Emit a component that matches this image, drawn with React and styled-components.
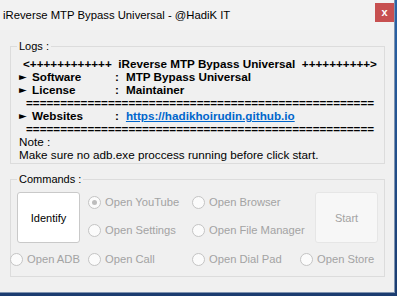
import React from 'react';
import styled, { createGlobalStyle } from 'styled-components';

const GlobalStyle = createGlobalStyle`
    body {
        margin: 0;
        background: #1d4a86;
        font-family: "Liberation Sans", Arial, sans-serif;
    }
`;

const Desktop = styled.div`
    width: 397px;
    height: 296px;
    overflow: hidden;
    background: linear-gradient(180deg, #2a64a8 0%, #1b3c70 100%);
`;

const Window = styled.div`
    width: 395px;
    height: 293px;
    box-sizing: border-box;
    background: #f0f0f0;
    border-right: 1px solid #7f93b0;
    border-bottom: 1px solid #7f93b0;
    display: flex;
    flex-direction: column;
`;

const TitleBar = styled.div`
    height: 30px;
    flex: none;
    display: flex;
    justify-content: space-between;
    align-items: flex-start;
    background: #f2f2f2;
`;

const Title = styled.div`
    padding-left: 3px;
    line-height: 30px;
    font-size: 11.3px;
    color: #000;
`;

const Close = styled.div`
    width: 19px;
    height: 19px;
    margin-top: 3px;
    background: #c75050;
    color: #fff;
    font-size: 11px;
    font-weight: bold;
    line-height: 18px;
    text-align: center;
`;

const Group = styled.fieldset`
    margin: ${p => p.$top}px 0 0 10px;
    width: 375px;
    min-width: 0;
    box-sizing: border-box;
    border: 1px solid #dcdcdc;
    padding: ${p => p.$pad};
`;

const Legend = styled.legend`
    padding: 0 2px;
    margin-left: ${p => p.$offset}px;
    font-size: 11px;
    line-height: 12px;
    color: #000;
`;

const Line = styled.div`
    height: 13px;
    line-height: 13px;
    font-size: 11.7px;
    font-weight: ${p => (p.$bold ? 'bold' : 'normal')};
    white-space: pre;
    color: #000;
    display: flex;
`;

const Banner = styled(Line)`
    padding-left: 4px;
`;

const Separator = styled(Line)`
    margin-left: 7px;
`;

const Arrow = styled.span`
    width: 13px;
    font-size: 10px;
    font-family: "DejaVu Sans", sans-serif;
`;

const Key = styled.span`
    width: 83px;
`;

const Value = styled.span`
    margin-left: ${p => p.$gap}px;
`;

const Link = styled.a`
    color: #0066cc;
    text-decoration: underline;
`;

const CommandGrid = styled.div`
    display: grid;
    grid-template-columns: 78px 104px 108px 1fr;
    grid-template-rows: 28px 28px 30px;
    margin-left: -1px;
`;

const Button = styled.div`
    grid-column: ${p => p.$col};
    grid-row: 1 / span 2;
    margin: 4px 0 0 ${p => p.$indent}px;
    width: 63px;
    height: 51px;
    box-sizing: border-box;
    border: 1px solid ${p => (p.$disabled ? '#e6e6e6' : '#c9c9c9')};
    border-radius: 3px;
    background: ${p => (p.$disabled ? '#f7f7f7' : '#ffffff')};
    color: ${p => (p.$disabled ? '#a3a3a3' : '#000')};
    font-size: 11px;
    display: flex;
    align-items: center;
    justify-content: center;
`;

const RadioItem = styled.label`
    display: flex;
    align-items: center;
    gap: 4px;
    font-size: 11.2px;
    color: #a3a3a3;
    white-space: nowrap;
`;

const Circle = styled.span`
    flex: none;
    width: 13px;
    height: 13px;
    box-sizing: border-box;
    border-radius: 50%;
    border: 1px solid #c4c4c4;
    background: #fbfbfb;
    display: flex;
    align-items: center;
    justify-content: center;
    &::after {
        content: '';
        width: 5px;
        height: 5px;
        border-radius: 50%;
        background: ${p => (p.$checked ? '#bdbdbd' : 'transparent')};
    }
`;

const Radio = ({ label, checked }) => (
    <RadioItem>
        <Circle $checked={checked} />
        {label}
    </RadioItem>
);

const InfoRow = ({ name, value, gap = 8, link }) => (
    <Line $bold>
        <Arrow>►</Arrow>
        <Key>{name}</Key>
        <span>:</span>
        <Value $gap={gap}>{link ? <Link>{value}</Link> : value}</Value>
    </Line>
);

const App = () => {
    const sep = '='.repeat(51);

    return (
        <Desktop>
            <GlobalStyle />
            <Window>
                <TitleBar>
                    <Title>iReverse MTP Bypass Universal - @HadiK IT</Title>
                    <Close>x</Close>
                </TitleBar>

                <Group $top={10} $pad="5px 8px 2px">
                    <Legend $offset={-2}>Logs :</Legend>
                    <Banner $bold>{'<++++++++++++  iReverse MTP Bypass Universal  ++++++++++>'}</Banner>
                    <InfoRow name="Software" value="MTP Bypass Universal" gap={7} />
                    <InfoRow name="License" value="Maintainer" gap={7} />
                    <Separator $bold>{sep}</Separator>
                    <InfoRow name="Websites" value="https://hadikhoirudin.github.io" gap={7} link />
                    <Separator $bold>{sep}</Separator>
                    <Line>Note :</Line>
                    <Line>Make sure no adb.exe proccess running before click start.</Line>
                </Group>

                <Group $top={9} $pad="3px 0 2px 0">
                    <Legend $offset={6}>Commands :</Legend>
                    <CommandGrid>
                        <Button $col={1} $indent={7}>Identify</Button>
                        <Radio label="Open YouTube" checked />
                        <Radio label="Open Browser" />
                        <Button $col={4} $indent={15} $disabled>Start</Button>
                        <Radio label="Open Settings" />
                        <Radio label="Open File Manager" />
                        <Radio label="Open ADB" />
                        <Radio label="Open Call" />
                        <Radio label="Open Dial Pad" />
                        <Radio label="Open Store" />
                    </CommandGrid>
                </Group>
            </Window>
        </Desktop>
    );
};

export default App;
